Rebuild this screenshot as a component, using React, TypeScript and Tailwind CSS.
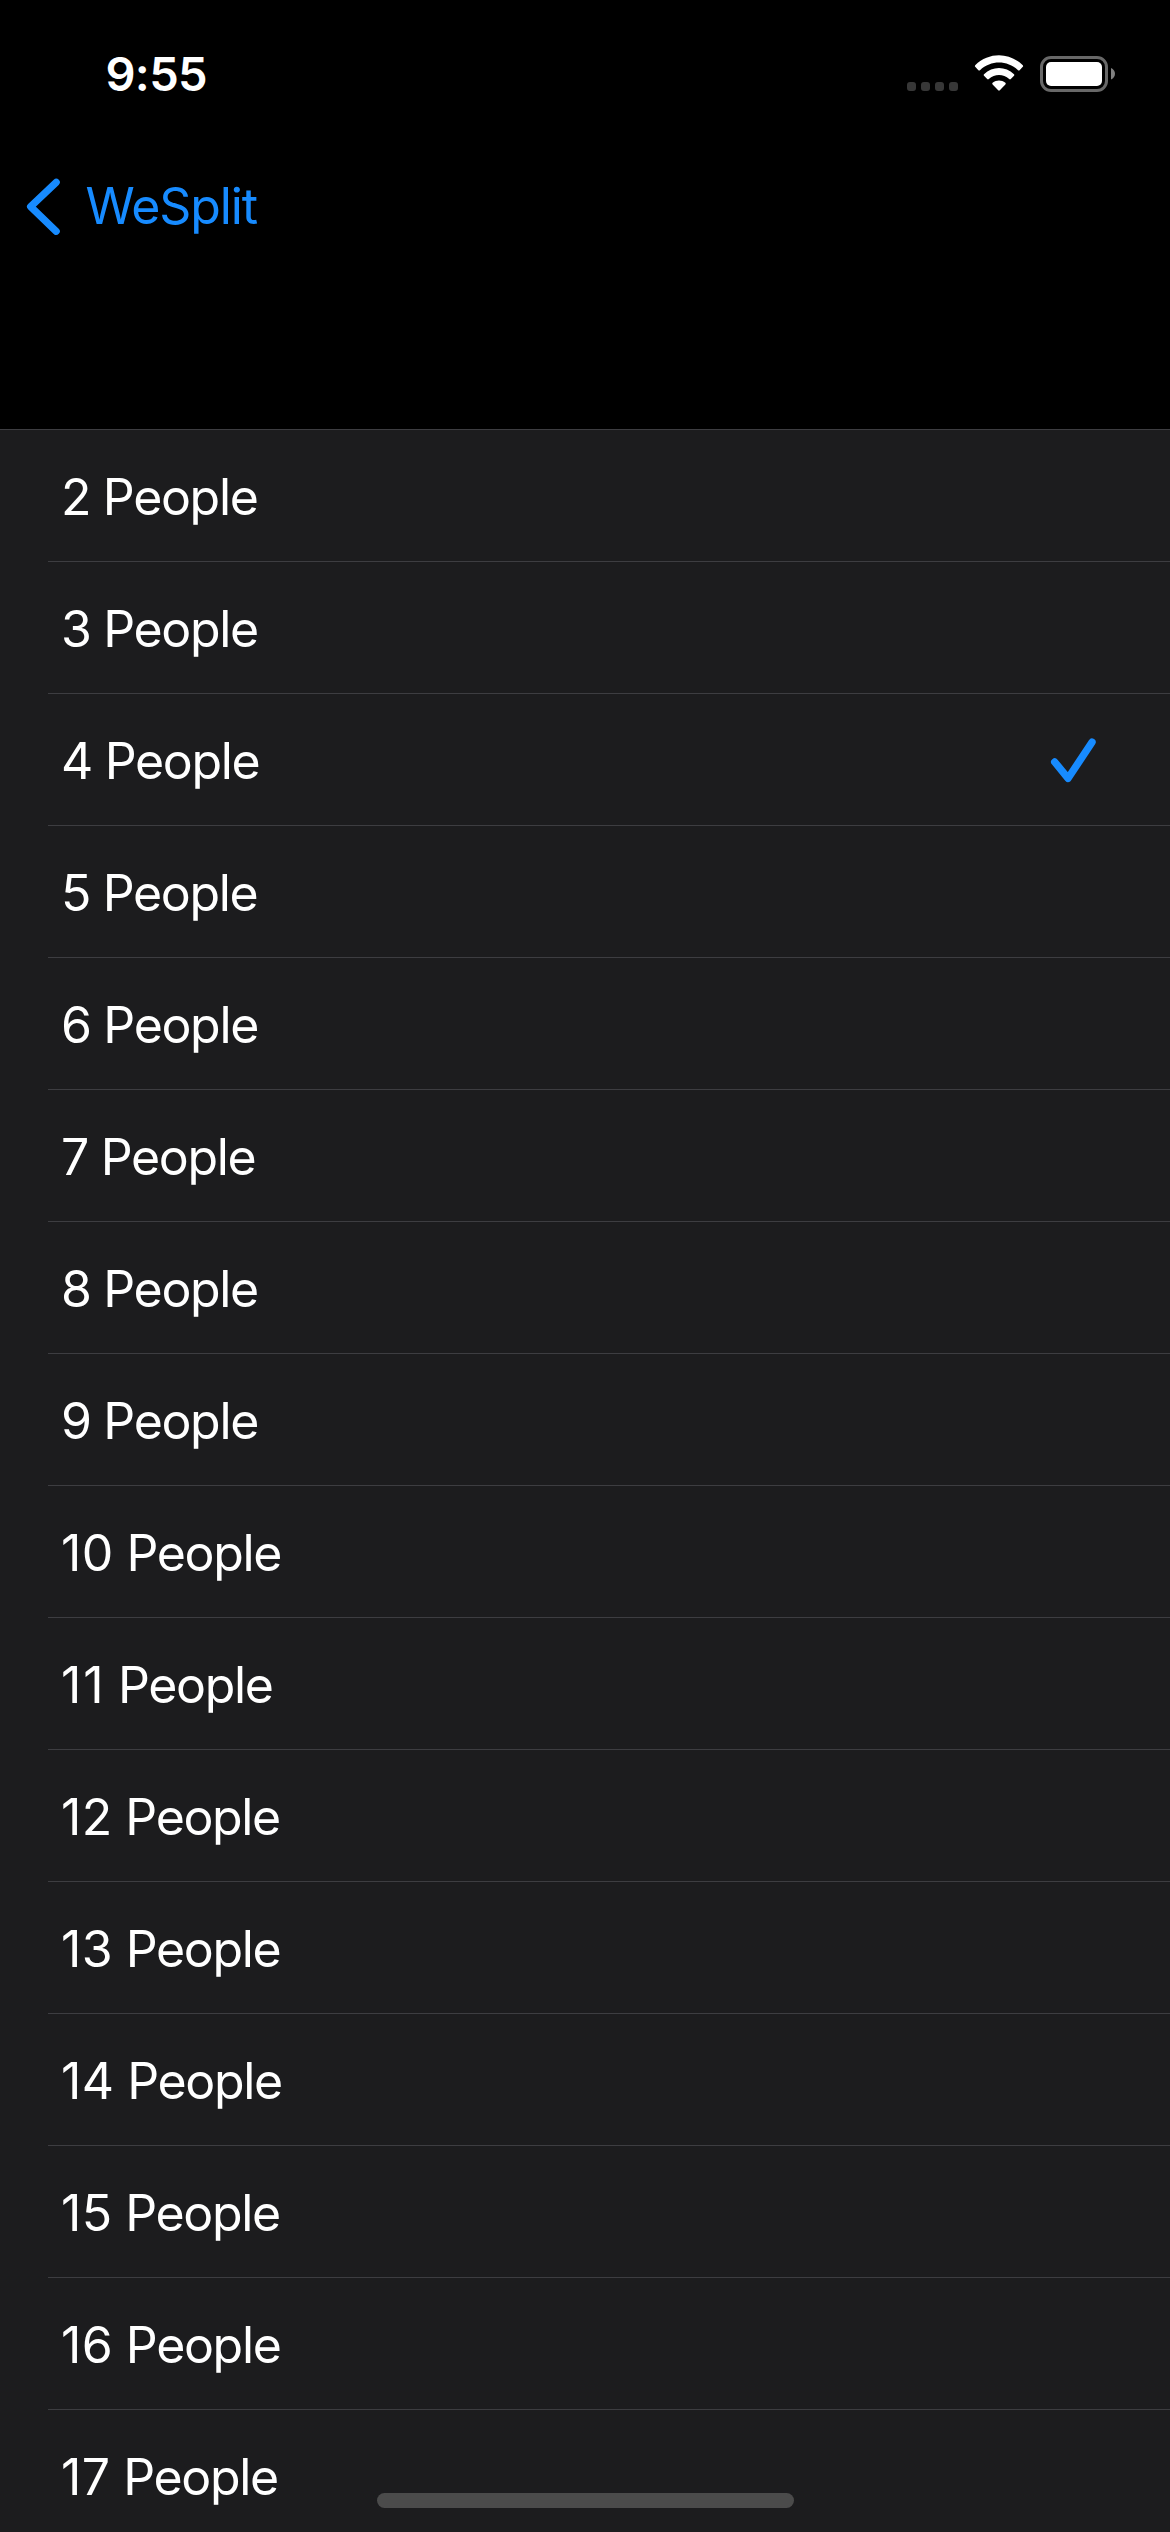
const people = Array.from({ length: 16 }, (_, i) => i + 2);

function StatusBar() {
  return (
    <div className="flex h-[132px] items-start justify-between pl-[105.5px] pr-[54px]">
      <span className="mt-[46px] text-[47px] leading-[56px] font-semibold tracking-[-0.7px]">9:55</span>
      <svg className="mt-[50px] h-[50px] w-[212px]" viewBox="0 0 212 50" fill="none">
        <g fill="#373737">
          <rect x="3" y="32" width="9" height="9" rx="3" />
          <rect x="17" y="32" width="9" height="9" rx="3" />
          <rect x="31" y="32" width="9" height="9" rx="3" />
          <rect x="45" y="32" width="9" height="9" rx="3" />
        </g>
        <g fill="white">
          <path d="M71.2 15.2 Q70.5 16 71.2 16.8 L74.4 20.2 Q75.2 21 76 20.2 C87 10 103 10 114 20.2 Q114.8 21 115.6 20.2 L118.8 16.8 Q119.5 16 118.8 15.2 C105 2 85 2 71.2 15.2 Z" />
          <path d="M80 24.2 Q79.2 25 80 25.8 L83.2 29 Q84 29.8 84.8 29 C90.7 23.7 99.3 23.7 105.2 29 Q106 29.8 106.8 29 L110 25.8 Q110.8 25 110 24.2 C101.5 15.8 88.5 15.8 80 24.2 Z" />
          <path d="M88.6 32.8 Q87.8 33.6 88.6 34.4 L94.2 40.3 Q95 41.2 95.8 40.3 L101.4 34.4 Q102.2 33.6 101.4 32.8 C97.5 29.8 92.5 29.8 88.6 32.8 Z" />
        </g>
        <rect x="137.5" y="7.5" width="65" height="33" rx="9.5" stroke="#686868" strokeWidth="3" />
        <rect x="142" y="12" width="56" height="24" rx="5" fill="white" />
        <path d="M207 18 Q211 20 211 23.8 Q211 27.6 207 29.6 Z" fill="#808080" />
      </svg>
    </div>
  );
}

function NavigationBar() {
  return (
    <nav className="flex h-[297px] items-start text-[#178bff]">
      <button className="ml-[24px] mt-[42px] flex h-[66px] items-center">
        <svg className="h-[66px] w-[40px]" viewBox="0 0 40 66" fill="none">
          <path d="M32.2 8.3 L6.6 32.6 L32.2 57.3" stroke="currentColor" strokeWidth="7.2" strokeLinecap="round" strokeLinejoin="round" />
        </svg>
        <span className="-mt-[3px] ml-[21.5px] text-[50px] leading-[62px] tracking-[-1.1px]">WeSplit</span>
      </button>
    </nav>
  );
}

function digitTracking(count: number) {
  if (count === 11) return "tracking-[1.8px]";
  return count > 9 ? "tracking-[0.4px]" : "";
}

function PersonRow({ count, selected }: { count: number; selected: boolean }) {
  return (
    <li className="h-[132px] shrink-0 pl-[48px] first:pl-0">
      <div
        className={
          "flex h-full items-center justify-between border-t border-[#3d3d41] pr-[72px] " +
          (count === 2 ? "pl-[61px]" : "pl-[13px]")
        }
      >
        <span className="mt-[2px] text-[50px] leading-[62px] tracking-[-1.35px]">
          <span className={digitTracking(count)}>{count}</span> People
        </span>
        {selected && (
          <svg className="-mt-[4px] h-[50px] w-[50px]" viewBox="0 0 50 50" fill="none">
            <path d="M6.7 29 L20.1 45.3 L44 9.2" stroke="#178bff" strokeWidth="7.4" strokeLinecap="round" strokeLinejoin="round" />
          </svg>
        )}
      </div>
    </li>
  );
}

export default function App() {
  return (
    <main className="relative flex h-[2532px] w-[1170px] flex-col overflow-hidden bg-black font-['Inter',sans-serif] text-white">
      <StatusBar />
      <NavigationBar />
      <ul className="flex flex-1 flex-col overflow-hidden bg-[#1c1c1e]">
        {people.map((count) => (
          <PersonRow key={count} count={count} selected={count === 4} />
        ))}
      </ul>
      <div className="absolute bottom-[24px] left-[377px] h-[15px] w-[417px] rounded-full bg-[#4b4b4b]" />
    </main>
  );
}
